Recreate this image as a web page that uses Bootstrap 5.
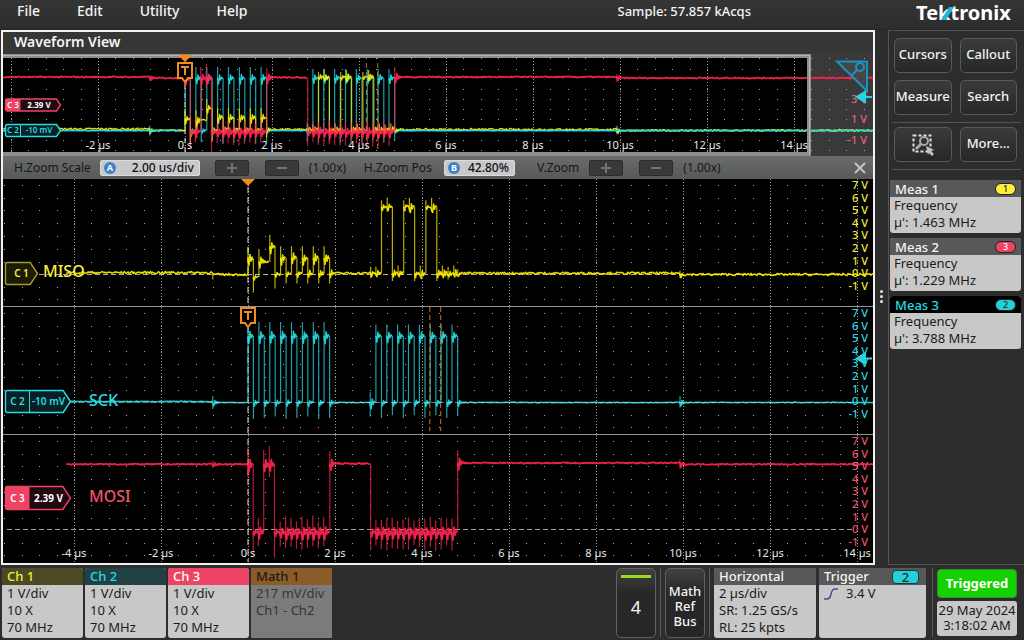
<!DOCTYPE html>
<html lang="en">
<head>
<meta charset="utf-8">
<meta name="viewport" content="width=device-width, initial-scale=1">
<title>Tektronix Waveform View</title>
<link rel="stylesheet" href="https://cdn.jsdelivr.net/npm/bootstrap@5.3.0/dist/css/bootstrap.min.css">
<style>
  body { background: #2d2d2d; color: #f4f4f4; font-family: "Noto Sans", sans-serif; font-size: 14px; font-weight: 500; line-height: 17px; overflow-x: hidden; }
  button, input { font-family: inherit; font-weight: inherit; }
  .menubar { height: 30px; background: linear-gradient(#353535, #2d2d2d); border-bottom: 1px solid #262626; }
  .menubar .menulink { color: #f4f4f4; text-decoration: none; line-height: 22px; }
  .menuset { gap: 37px; padding-left: 17px; }
  .sample { font-size: 13px; line-height: 22px; margin-right: 165px; }
  .brand { position: relative; width: 108px; height: 26px; }
  .brand svg { display: block; }
  .scope { margin-left: 1px; border: 2px solid #f2f2f2; background: #000; min-width: 0; }
  .titlebar { height: 22px; background: #363634; padding-left: 11px; line-height: 20px; font-weight: 600; }
  .overview { height: 102px; background: #393939; }
  .pane { height: 128px; background: #000; }
  .plotsvg { display: block; width: 100%; height: 100%; overflow: hidden; }
  .zoombar { height: 23px; background: linear-gradient(#6a6c6b, #565958); color: #161616; font-size: 12px; font-weight: 400; padding: 0 5px 0 11px; }
  .fieldwrap { position: relative; }
  .fieldwrap input { height: 16px; border: 1px solid #dcdcdc; border-radius: 2px; background: #c9c9cb; color: #111; text-align: right; padding: 0 5px; display: block; width: 100%; font-weight: 500; }
  .knob { position: absolute; left: 4px; top: 2px; width: 12px; height: 12px; border-radius: 50%; background: #3b82c8; color: #fff; font-size: 9px; font-weight: 700; line-height: 12px; text-align: center; }
  .w-scale { width: 100px; margin: 0 15px 0 9px; }
  .w-pos { width: 71px; margin: 0 22px 0 12px; }
  .vzlabel { margin-right: 10px; }
  .stepbtn { width: 34px; height: 16px; border: 1px solid #2c2c2c; border-radius: 2px; background: #393939; padding: 0; margin-right: 16px; display: flex; align-items: center; justify-content: center; }
  .stepbtn.endstep { margin-right: 10px; }
  .ratio1 { width: 55px; }
  .closebtn { border: 0; background: none; padding: 0; line-height: 0; }
  .splitter { width: 13px; }
  .splitter span { width: 3px; height: 3px; border-radius: 50%; background: #e6e6e6; margin-bottom: 2px; }
  .sidepanel { width: 136px; border: 1px solid #555; border-right: 0; padding-top: 7px; }
  .toolrow { gap: 8px; padding: 0 7px 0 5px; margin-bottom: 7px; }
  .toolbtn { height: 35px; flex: 1 1 0; min-width: 0; border: 1px solid #5e5957; border-radius: 5px; background: linear-gradient(#393b3b, #272727); color: #f4f4f4; padding: 0 0 3px; font-size: 13px; white-space: nowrap; }
  .rule { height: 1px; background: #555; margin: 0 3px 4px; }
  .endrule { margin-bottom: 10px; }
  .tile { background: #c8c8c8; color: #1a1a1a; border-radius: 3px; overflow: hidden; font-size: 13px; font-weight: 400; }
  .tilehead { height: 17px; line-height: 16px; background: #57585a; color: #f4f4f4; font-weight: 500; padding: 0 5px; }
  .meas { height: 53px; margin: 0 3px 5px 1px; }
  .pill { width: 21px; height: 12px; border-radius: 6px; border: 1px solid #222; color: #222; font-size: 9px; line-height: 10px; text-align: center; }
  .footbar { height: 75px; padding: 3px 7px 3px 2px; }
  .chan { width: 81px; height: 70px; margin-right: 2px; }
  .chan p, .info p { margin: 0; padding-left: 5px; line-height: 17px; white-space: nowrap; }
  .offchan { background: #7b7b7b; color: #363636; border-radius: 0; }
  .footbtn { height: 70px; width: 40px; border: 1px solid #665f5c; border-radius: 5px; background: linear-gradient(#404142, #272727 35%); color: #f4f4f4; padding: 0; }
  .footbtn i { display: block; height: 3px; margin: 6px 4px 0; background: #98d820; }
  .four { font-size: 18px; font-weight: 400; line-height: 58px; padding-bottom: 2px; }
  .mrb { font-size: 13px; line-height: 15px; padding-top: 6px; }
  .vrule { width: 1px; background: #5c5855; margin: 0 4px; }
  .runrule { margin-left: 6px; }
  .trig { width: 107px; height: 70px; }
  .horiz { width: 102px; height: 70px; margin-right: 3px; }
  .trigpill { width: 27px; height: 14px; margin: 2px 3px 0 0; border: 1px solid #173a3c; border-radius: 4px; background: #26d0d8; color: #163436; line-height: 12px; text-align: center; }
  .runbtn { height: 29px; width: 80px; border: 1px solid #3b8d34; border-radius: 4px; background: #14d100; color: #fff; font-size: 13px; font-weight: 700; padding: 0; margin: 1px 0 3px; }
  .clock { width: 80px; height: 35px; font-size: 13px; line-height: 15px; padding-top: 2px; white-space: nowrap; text-align: center; }
</style>
</head>
<body>
<header class="menubar d-flex">
  <nav class="menuset d-flex flex-grow-1">
    <a class="menulink" href="#file">File</a>
    <a class="menulink" href="#edit">Edit</a>
    <a class="menulink" href="#utility">Utility</a>
    <a class="menulink" href="#help">Help</a>
  </nav>
  <div class="sample">Sample: 57.857 kAcqs</div>
  <div class="brand">
    <svg width="108" height="26" role="img" aria-label="Tektronix">
      <text x="0" y="20" font-size="20" font-weight="700" fill="#fff" font-family="Noto Sans">Tektronix</text>
      <path d="M25 20L33 7H38L30 20Z" fill="#22b8de"/>
    </svg>
  </div>
</header>

<main class="d-flex">
  <section class="scope flex-grow-1">
    <div class="titlebar">Waveform View</div>
    <div class="overview"><svg class="plotsvg" id="overview"></svg></div>
    <div class="zoombar d-flex align-items-center">
      <label for="hscale">H.Zoom Scale</label>
      <div class="fieldwrap w-scale"><span class="knob">A</span><input id="hscale" type="text" value="2.00 us/div"></div>
      <button class="stepbtn" aria-label="Increase scale"><svg width="12" height="12"><path d="M6 1V11M1 6H11" stroke="#747474" stroke-width="2"/></svg></button>
      <button class="stepbtn endstep" aria-label="Decrease scale"><svg width="12" height="12"><path d="M1 6H11" stroke="#747474" stroke-width="2"/></svg></button>
      <span class="ratio1">(1.00x)</span>
      <label for="hpos">H.Zoom Pos</label>
      <div class="fieldwrap w-pos"><span class="knob">B</span><input id="hpos" type="text" value="42.80%"></div>
      <span class="vzlabel">V.Zoom</span>
      <button class="stepbtn" aria-label="Increase vertical zoom"><svg width="12" height="12"><path d="M6 1V11M1 6H11" stroke="#747474" stroke-width="2"/></svg></button>
      <button class="stepbtn endstep" aria-label="Decrease vertical zoom"><svg width="12" height="12"><path d="M1 6H11" stroke="#747474" stroke-width="2"/></svg></button>
      <span>(1.00x)</span>
      <button class="closebtn ms-auto" aria-label="Close zoom"><svg width="16" height="14"><path d="M3 2L13 12M13 2L3 12" stroke="#c4c4c4" stroke-width="2"/></svg></button>
    </div>
    <div class="pane"><svg class="plotsvg" id="miso"></svg></div>
    <div class="pane"><svg class="plotsvg" id="sck"></svg></div>
    <div class="pane"><svg class="plotsvg" id="mosi"></svg></div>
  </section>

  <div class="splitter d-flex flex-column align-items-center justify-content-center"><span></span><span></span><span></span></div>

  <aside class="sidepanel">
    <div class="toolrow d-flex"><button class="toolbtn">Cursors</button><button class="toolbtn">Callout</button></div>
    <div class="toolrow d-flex"><button class="toolbtn">Measure</button><button class="toolbtn">Search</button></div>
    <div class="rule"></div>
    <div class="toolrow d-flex">
      <button class="toolbtn" aria-label="Draw a box">
        <svg width="24" height="24" fill="none" class="mt-1"><rect x="2.500" y="2.500" width="17" height="16" stroke="#e2e2e2" stroke-width="2" stroke-dasharray="3 2"/><circle cx="13" cy="8" r="4" stroke="#aaa" stroke-width="2"/><path d="M10 11L5 16" stroke="#aaa" stroke-width="3"/><path d="M15 13L23 17L20 18L23 21L21 23L18 20L17 22Z" fill="#c2c2c2"/></svg>
      </button>
      <button class="toolbtn">More...</button>
    </div>
    <div class="rule endrule"></div>
    <div class="tile meas"><div class="tilehead d-flex align-items-center justify-content-between">Meas 1<span class="pill" style="background:#ffef3a">1</span></div><div class="px-1">Frequency<br>µ': 1.463 MHz</div></div>
    <div class="tile meas"><div class="tilehead d-flex align-items-center justify-content-between">Meas 2<span class="pill text-white" style="background:#ef4361">3</span></div><div class="px-1">Frequency<br>µ': 1.229 MHz</div></div>
    <div class="tile meas"><div class="tilehead d-flex align-items-center justify-content-between" style="background:#000;color:#26dbe3">Meas 3<span class="pill" style="background:#26d0d8">2</span></div><div class="px-1">Frequency<br>µ': 3.788 MHz</div></div>
  </aside>
</main>

<footer class="footbar d-flex">
  <div class="tile chan"><div class="tilehead" style="background:#4c4a25;color:#f6ec38">Ch 1</div><p>1 V/div</p><p>10 X</p><p>70 MHz</p></div>
  <div class="tile chan"><div class="tilehead" style="background:#204245;color:#26dbe3">Ch 2</div><p>1 V/div</p><p>10 X</p><p>70 MHz</p></div>
  <div class="tile chan"><div class="tilehead" style="background:#ee4463;color:#fff">Ch 3</div><p>1 V/div</p><p>10 X</p><p>70 MHz</p></div>
  <div class="tile chan offchan"><div class="tilehead" style="background:#8b5c29;color:#1d1a16">Math 1</div><p>217 mV/div</p><p>Ch1 - Ch2</p></div>
  <button class="footbtn four ms-auto"><i></i>4</button>
  <div class="vrule"></div>
  <button class="footbtn mrb">Math<br>Ref<br>Bus</button>
  <div class="vrule"></div>
  <div class="tile info horiz"><div class="tilehead">Horizontal</div><p>2 µs/div</p><p>SR: 1.25 GS/s</p><p>RL: 25 kpts</p></div>
  <div class="tile info trig">
    <div class="tilehead d-flex justify-content-between pe-1">Trigger<span class="trigpill">2</span></div>
    <p class="d-flex align-items-center"><svg width="22" height="14" fill="none"><path d="M0 12H3Q6 12 7 7Q8 2 11 2H14" stroke="#4a4e8c" stroke-width="1.500"/></svg>3.4 V</p>
  </div>
  <div class="vrule runrule"></div>
  <div>
    <button class="runbtn">Triggered</button>
    <div class="tile clock">29 May 2024<br>3:18:02 AM</div>
  </div>
</footer>
<script src="https://cdn.jsdelivr.net/npm/bootstrap@5.3.0/dist/js/bootstrap.bundle.min.js"></script>
<script>
const C = { y: '#fff000', c: '#27dce4', r: '#ff2450', label: '#f4506c' };
let seed = 1;
const rnd = () => (seed = seed * 16807 % 2147483647) / 2147483647;

// Signals are lists of edges: [time in µs, level in V, peak of the overshoot in V, lowest point of the ringing in V]
const HALF = .125, BIT = .25;
const miso = [], sck = [], mosi = [];
function pulse(list, t, hi, peak, under, low, width = HALF) {
  list.push([t, hi, peak, hi - .5], [t + width, low, low + .5, under]);
}
miso.push([-.81, 0, .1, -.4]);
pulse(miso, 0, 1.2, 2.1, -1.4, -.2);
miso.push([.25, 1, 2, .6], [.5, 2.2, 3.1, 1.6], [.62, 0, .5, -1.1]);
for (let k = 3; k < 8; k++) pulse(miso, k * BIT, 1.3, 2.2, -.7, .1);
miso.push([2.82, .1, .6, -.3], [2.94, .1, .6, -.1]);
for (const t of [3.07, 3.58, 4.09]) miso.push([t, 5.3, 5.8, 5], [t + .13, 5.3, 6, 4.9], [t + .25, .1, .6, -.5], [t + .38, .1, .7, -.1]);
miso.push([4.6, .1, .6, -.4], [4.73, .1, .7, -.1], [4.82, .1, .4, -.1], [9.93, 0, .3, -.25]);
sck.push([-.81, 0, .5, -.5]);
for (let k = 0; k < 8; k++) pulse(sck, k * BIT, 5.2, 6.3, -1.3 + (k % 3) * .1, 0);
sck.push([2.81, 0, .8, -1.1]);
for (let k = 0; k < 8; k++) pulse(sck, 2.94 + k * BIT, 5.2, 6.1, -1.2 + (k % 2) * .2, 0, .13);
sck.push([9.93, 0, .5, -.4]);
mosi.push([-.81, 5.1, 5.4, 4.8], [0, 5.1, 6.5, 4.1], [.12, -.2, .3, -1.9], [.24, -.2, .9, -1.3], [.36, 5.1, 6.2, 4.7], [.49, 5.1, 6.5, 4.1], [.61, -.2, .4, -2.2]);
for (let t = .74; t < 1.83; t += HALF) mosi.push([t, -.2, .6 + rnd() * .6, -1.3 - rnd() * .3]);
mosi.push([1.88, 5.15, 6.1, 4.5], [2.82, -.2, .4, -1.6]);
for (let t = 2.94; t < 4.8; t += HALF) mosi.push([t, -.2, .6 + rnd() * .4, -1.2 - rnd() * .5]);
mosi.push([4.82, 5.2, 6.2, 4.9], [9.93, 5.1, 5.5, 4.7]);

function trace(edges, start, X, Y, end, color, amp, weight) {
  let steep = '', level = start, t = -4.18, since = 99, tune = 1;
  let flat = 'M' + X(t).toFixed(1) + ' ' + Y(level).toFixed(1);
  const step = 1 / 43.5;
  edges.concat([[end, null]]).forEach(([te, to, peak, dip]) => {
    while (t + step < te) {
      t += step; since++;
      const ring = tune * Math.exp(-since / 1.8) * (since % 2 ? -1 : 1);
      flat += ' L' + X(t).toFixed(1) + ' ' + Y(level + ring + (rnd() - .5) * amp).toFixed(1);
    }
    if (to === null) return;
    t = te;
    if (Math.abs(to - level) > .8) {
      steep += 'M' + X(t).toFixed(1) + ' ' + Y(level).toFixed(1) + 'V' + Y(to).toFixed(1);
      flat += 'M' + X(t).toFixed(1) + ' ' + Y(to).toFixed(1);
    }
    steep += 'M' + X(t).toFixed(1) + ' ' + Y(peak).toFixed(1) + 'V' + Y(dip).toFixed(1);
    tune = Math.min(peak - to, 1); since = 0; level = to;
  });
  return `<path d="${steep}" stroke="${color}" stroke-opacity=".72" stroke-width="1.200" fill="none"/><path d="${flat}" stroke="${color}" stroke-opacity=".92" stroke-width="${weight}" fill="none" stroke-linejoin="round"/>`;
}
const text = (x, y, s, fill, size = 11, anchor = 'end', weight = 500) =>
  `<text x="${x}" y="${y}" fill="${fill}" font-size="${size}" font-weight="${weight}" text-anchor="${anchor}" font-family="Noto Sans, sans-serif">${s}</text>`;
function grid(X, first, H, rows, W, t0) {
  let s = '';
  for (let t = t0; X(t) < W; t += 2) s += `<path d="M${Math.round(X(t)) + .5} ${first}V${H}" stroke="#999" stroke-dasharray="1 2"/>`;
  for (const y of rows) for (let t = t0 - 2; X(t) < W; t += .4)
    if (X(t) > 0) s += `<rect x="${Math.round(X(t))}" y="${y}" width="1" height="1" fill="#a5a5a5"/>`;
  return s;
}
const times = (X, y, t0) => { let s = ''; for (let t = t0; t <= 14; t += 2) s += text(X(t), y, t ? t + ' µs' : '0 s', '#e8e8e8', 11, 'middle', 400); return s; };
const marker = x => `<path d="M${x - 7} 0H${x + 7}V15H${x + 3}L${x} 19L${x - 3} 15H${x - 7}Z" fill="#000" stroke="#f58a1f" stroke-width="2"/><path d="M${x - 4} 4H${x + 4}M${x} 4V12" stroke="#f58a1f" stroke-width="2"/>`;
const tri = (x, y) => `<path d="M${x - 7} ${y}H${x + 7}L${x} ${y + 7}Z" fill="#f58a1f"/>`;
const arrow = (x, y) => `<path d="M${x} ${y}H${x - 6}" stroke="#27d3dc" stroke-width="2"/><path d="M${x - 17} ${y}L${x - 6} ${y - 7}V${y + 7}Z" fill="#27d3dc"/>`;
function badge(x, y, w, h, name, value, color, dark, split, solid, size) {
  let s = `<path d="M${x + 2} ${y}H${x + w - h / 3}L${x + w} ${y + h / 2}L${x + w - h / 3} ${y + h}H${x + 2}Q${x} ${y + h} ${x} ${y + h - 2}V${y + 2}Q${x} ${y} ${x + 2} ${y}Z" fill="${dark}" stroke="${color}" stroke-width="1.400"/>`;
  if (solid) s += `<rect x="${x}" y="${y}" width="${split}" height="${h}" rx="1" fill="${color}"/>`;
  else if (value) s += `<path d="M${x + split} ${y}V${y + h}" stroke="${color}"/>`;
  const ink = solid ? '#fff' : color, base = y + h / 2 + size * .36;
  s += text(x + (value ? split / 2 : 16), base, name, ink, size, 'middle', 600);
  if (value) s += text(x + (split + w - 3) / 2, base, value, ink, size, 'middle', solid ? 700 : 600);
  return s;
}

function draw() {
  seed = 7;
  const ov = document.getElementById('overview'), W = ov.clientWidth, k = W / 870;
  const X0 = t => (182 + t * 43.5) * k, X1 = t => (245 + t * 43.5) * k;
  const right = W - 66;
  let Y = v => 76.5 - v * 10.1;
  const Yred = v => 75.5 - v * 10.1;
  ov.innerHTML = `<rect width="${right}" height="102"/>` +
    grid(X0, 4, 100, [4, 15, 35, 45, 55, 65, 86, 96], W, -4) +
    `<path d="M${X0(0)} 30V102" stroke="#ddd" stroke-dasharray="5 4"/>` +
    trace(sck, 0, X0, Y, 17, C.c, .06, 1.4) + trace(miso, .15, X0, Y, 17, C.y, .2, 1.3) +
    `<path d="M0 76.500H${X0(-.1)}M${X0(1.95)} 76.500H${X0(2.8)}M${X0(4.9)} 76.500H${W}" stroke="${C.c}" stroke-width="1.500"/>` +
    trace(mosi, 5.2, X0, Yred, 17, C.r, .12, 1.8) +
    `<path d="M${X0(4.17)} 0V102M${X0(4.43)} 0V102" stroke="#f58a1f" stroke-opacity=".8" stroke-dasharray="5 4"/>` +
    `<path d="M0 2H${right + 2}V100H0" fill="none" stroke="#8d8d8d" stroke-width="4"/><path d="M0 1.500H${right + 2.5}V100.500" fill="none" stroke="#b5b5b5"/>` +
    times(X0, 95, -2) +
    text(W - 6, 49, '3 V', '#e4607a') + text(W - 6, 69, '1 V', '#e4607a') + text(W - 6, 90, '-1 V', '#e4607a') +
    `<path d="M${W - 36} 7.500H${W - 6}V37Z" fill="#454545" stroke="#1c93bd" stroke-width="2"/><circle cx="${W - 13}" cy="13" r="4" fill="none" stroke="#1c93bd" stroke-width="2"/><path d="M${W - 16} 16L${W - 22} 22" stroke="#1c93bd" stroke-width="2"/>` +
    arrow(W - 1, 43) + tri(X0(0), 1) + `<g transform="translate(0 9)">${marker(X0(0))}</g>` +
    badge(2.5, 45, 55, 12, 'C 3', '2.39 V', '#ee4463', '#200910', 15, true, 8) +
    badge(2.5, 70.500, 55, 12, 'C 2', '-10 mV', C.c, '#072022', 15, false, 8);

  const rows = [6, 19, 31, 44, 57, 70, 83, 108, 120];
  const axis = col => { let s = ''; for (let v = 7; v > -2; v--) s += text(W - 5, Math.round(10 + (7 - v) * 12.6), v + ' V', col); return s; };
  Y = v => 95.5 - v * 12.8;
  const base = top => grid(X1, 0, 127, rows, W, -4) + `<path d="M${X1(0)} ${top}V127" stroke="#ddd" stroke-dasharray="6 4"/>`;
  const zero = (y, col, alpha) => `<path d="M4 ${y}H${W - 20}" stroke="${col}" stroke-opacity="${alpha}" stroke-dasharray="5 3"/>`;
  const sep = `<path d="M0 127.500H${W}" stroke="#929292"/>`;
  const signalName = (x, y, s, c) => text(x, y, s, c, 16, 'start', 500);

  document.getElementById('miso').innerHTML = base(8) + zero(95.5, '#aaa', 1) + trace(miso, .15, X1, Y, 15, C.y, .18, 1.5) + axis('#f5ea32') + tri(X1(0), 0) + sep +
    badge(2.5, 83.500, 32, 22, 'C 1', '', '#a59d2b', '#1c1b08', 0, false, 10).replace('fill="#a59d2b"', 'fill="#f5ee5c"') + signalName(40, 98, 'MISO', '#f7ef3c');
  document.getElementById('sck').innerHTML = base(20) + trace(sck, .08, X1, Y, 15, C.c, .06, 1.5) + zero(95.5, '#ddd', .5) +
    `<path d="M${X1(4.18)} 0V124M${X1(4.43)} 0V124" stroke="#f58a1f" stroke-opacity=".85" stroke-dasharray="5 3"/>` +
    axis(C.c) + arrow(W - 1, 51.5) + `<g transform="translate(0 1)">${marker(X1(0))}</g>` + sep +
    badge(2.5, 83.500, 65, 22, 'C 2', '-10 mV', C.c, '#072022', 24, false, 10) + signalName(86, 99, 'SCK', C.c);
  Y = v => 94.5 - v * 12.8;
  document.getElementById('mosi').innerHTML = base(4) + zero(94.5, '#ccc', .8) +
    trace(mosi, 5.1, X1, Y, 15, C.r, .1, 1.8) +
    axis(C.label) + times(X1, 122, -4) +
    badge(2.5, 51.500, 65, 23, 'C 3', '2.39 V', '#ee4463', '#200910', 24, true, 10) + signalName(86, 67, 'MOSI', C.label);
}
draw();
addEventListener('resize', draw);
</script>
</body>
</html>
